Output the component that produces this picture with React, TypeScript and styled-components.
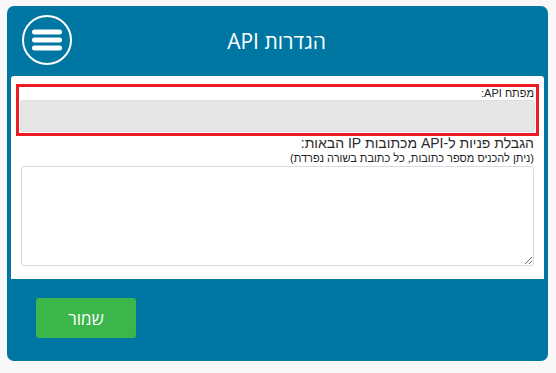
import React from 'react'
import styled, { createGlobalStyle } from 'styled-components'

const GlobalStyle = createGlobalStyle`
  html, body {
    margin: 0;
    padding: 0;
    background: #f8f8f8;
  }
  body {
    font-family: "Open Sans", "Liberation Sans", sans-serif;
  }
`

const Page = styled.div`
  padding: 6px 8px 12px 7px;
`

const Card = styled.div`
  direction: rtl;
  background: #0077a2;
  border-radius: 7px;
  height: 355px;
  display: flex;
  flex-direction: column;
  box-sizing: border-box;
  padding: 0 4px;
`

const Header = styled.div`
  height: 70px;
  display: flex;
  align-items: center;
  justify-content: center;
  position: relative;
`

const Title = styled.h1`
  margin: 0 2px 0 0;
  color: #fff;
  font-size: 21px;
  font-weight: 400;
  line-height: 1;
  padding-top: 1px;
`

const MenuButton = styled.button`
  position: absolute;
  left: 11px;
  top: 9px;
  width: 50px;
  height: 50px;
  border: 0;
  padding: 0;
  background: transparent;
  cursor: pointer;
`

const Panel = styled.div`
  background: #fff;
  border-radius: 3px 3px 0 0;
  height: 203px;
  padding: 8px 5px 0;
  box-sizing: border-box;
`

const KeyBox = styled.div`
  border: 3px solid #ed1c24;
  padding: 0 1px 1px;
  display: flex;
  flex-direction: column;
`

const SmallLabel = styled.label`
  font-family: "Liberation Sans", "DejaVu Sans", sans-serif;
  font-size: 11px;
  color: #222;
  line-height: 13px;
  padding-right: 1px;
`

const KeyField = styled.div`
  height: 32px;
  background: #e6e6e6;
  border: 1px solid #dedede;
  border-radius: 3px;
  box-sizing: border-box;
`

const Section = styled.div`
  display: flex;
  flex-direction: column;
  padding: 0 5px;
`

const Heading = styled.div`
  font-family: "Liberation Sans", "DejaVu Sans", sans-serif;
  font-size: 14px;
  color: #2a2a2a;
  line-height: 15px;
`

const Hint = styled.div`
  font-family: "Liberation Sans", "DejaVu Sans", sans-serif;
  font-size: 11px;
  color: #222;
  line-height: 14px;
`

const Area = styled.textarea`
  direction: ltr;
  text-align: right;
  margin-top: 1px;
  height: 100px;
  border: 1px solid #d6dce2;
  border-radius: 3px;
  box-sizing: border-box;
  resize: vertical;
  font: inherit;
  width: 100%;
`

const Footer = styled.div`
  flex: 1;
  display: flex;
  align-items: flex-start;
  padding: 19px 25px 0;
  direction: ltr;
`

const SaveButton = styled.button`
  width: 100px;
  height: 40px;
  border: 0;
  border-radius: 3px;
  background: #3bb64a;
  color: #fff;
  font-family: "Open Sans", sans-serif;
  font-size: 17px;
  cursor: pointer;
`

function MenuIcon() {
  return (
    <svg width="50" height="50" viewBox="0 0 50 50">
      <circle cx="25" cy="25" r="24" fill="none" stroke="#fff" strokeWidth="2" />
      <g stroke="#fff" strokeWidth="5" strokeLinecap="round">
        <line x1="12.5" y1="17" x2="37.5" y2="17" />
        <line x1="12.5" y1="25" x2="37.5" y2="25" />
        <line x1="12.5" y1="33" x2="37.5" y2="33" />
      </g>
    </svg>
  )
}

export default function App() {
  return (
    <>
      <GlobalStyle />
      <Page>
        <Card>
          <Header>
            <Title>הגדרות API</Title>
            <MenuButton aria-label="menu">
              <MenuIcon />
            </MenuButton>
          </Header>
          <Panel>
            <KeyBox>
              <SmallLabel>מפתח API:</SmallLabel>
              <KeyField />
            </KeyBox>
            <Section>
              <Heading>הגבלת פניות ל-API מכתובות IP הבאות:</Heading>
              <Hint>(ניתן להכניס מספר כתובות, כל כתובת בשורה נפרדת)</Hint>
              <Area />
            </Section>
          </Panel>
          <Footer>
            <SaveButton>שמור</SaveButton>
          </Footer>
        </Card>
      </Page>
    </>
  )
}
